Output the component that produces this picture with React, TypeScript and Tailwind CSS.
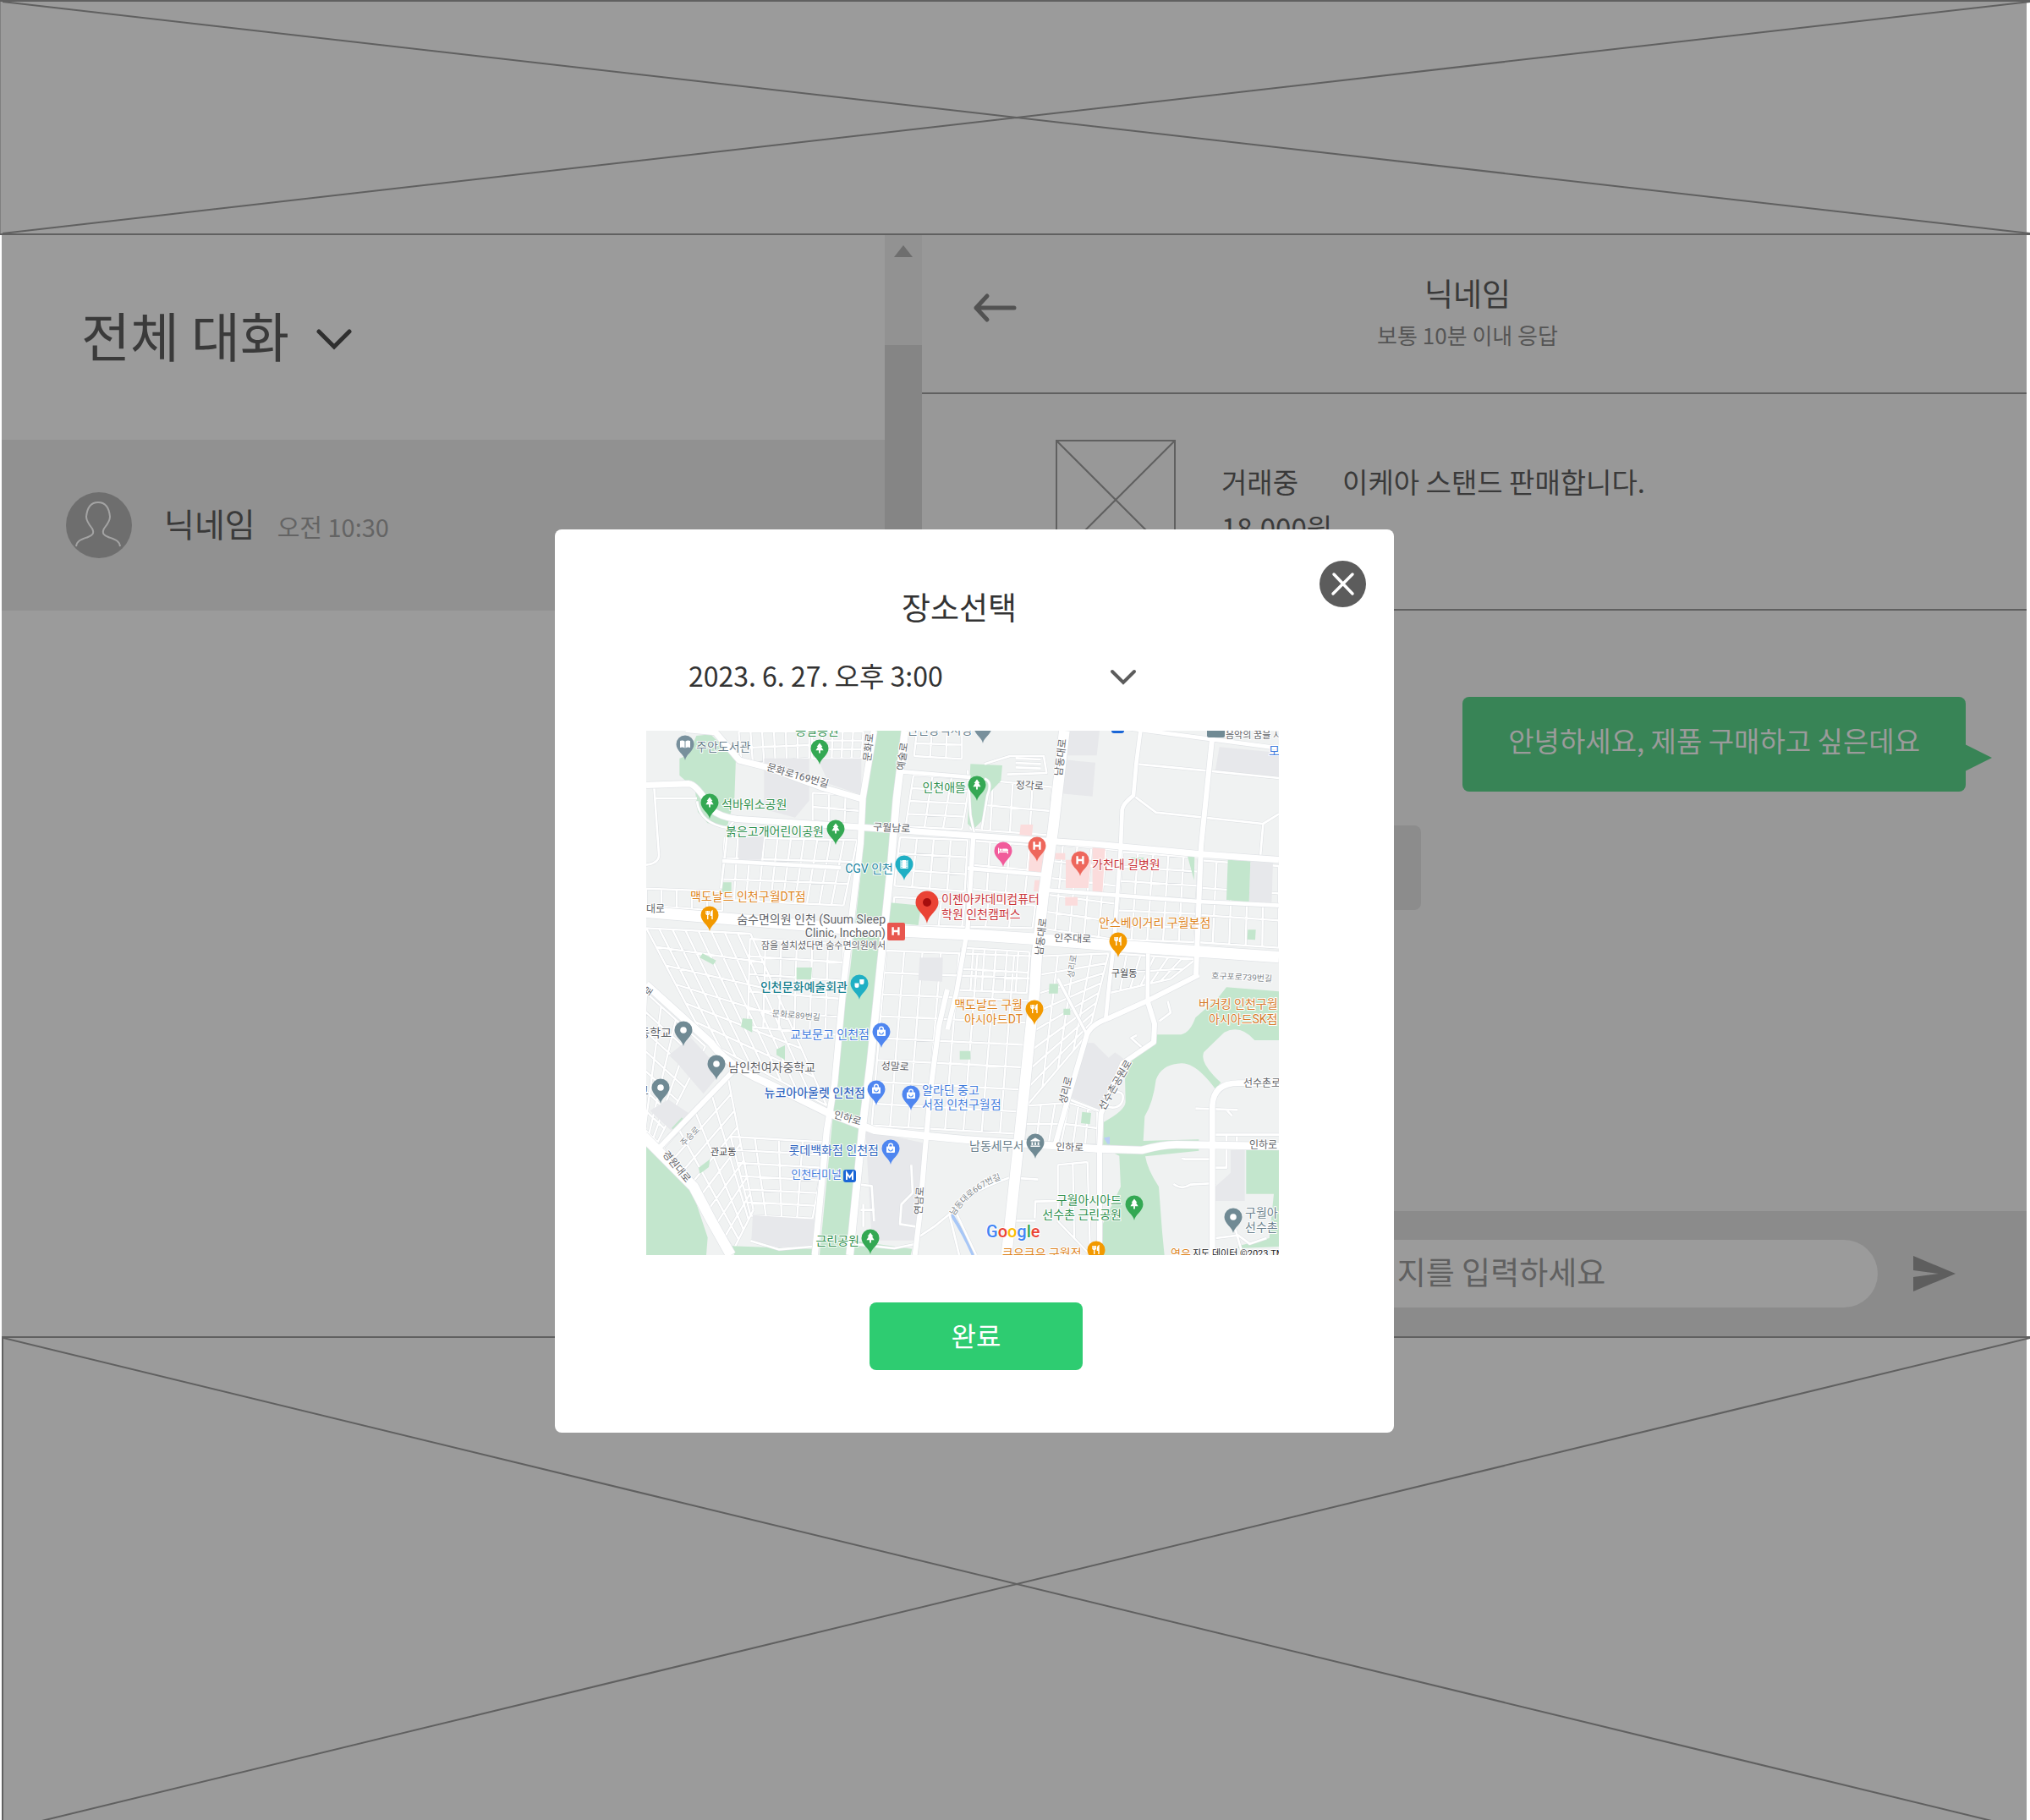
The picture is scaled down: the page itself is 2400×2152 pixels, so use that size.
import React from "react";

type Pt = [number, number];

/* ---------- Map geometry (drawn in a 2244 x 1860 space) ---------- */

function grid(a: Pt, b: Pt, c: Pt, d: Pt, nx: number, ny: number): string {
  const mix = (p: Pt, q: Pt, t: number): Pt => [p[0] + (q[0] - p[0]) * t, p[1] + (q[1] - p[1]) * t];
  const seg = (p: Pt, q: Pt) => `M${p[0].toFixed(0)},${p[1].toFixed(0)}L${q[0].toFixed(0)},${q[1].toFixed(0)}`;
  let out = "";
  for (let i = 0; i <= nx; i++) out += seg(mix(a, b, i / nx), mix(d, c, i / nx));
  for (let j = 0; j <= ny; j++) out += seg(mix(a, d, j / ny), mix(b, c, j / ny));
  return out;
}

const streets = [
  grid([328, 3], [578, 3], [578, 98], [338, 118], 6, 2),
  grid([588, 3], [770, 3], [763, 98], [588, 98], 5, 3),
  grid([590, 220], [765, 230], [760, 340], [590, 320], 3, 2),
  grid([278, 378], [748, 388], [700, 620], [268, 600], 10, 3),
  grid([960, 0], [1120, 0], [1120, 100], [950, 90], 3, 2),
  grid([948, 158], [1150, 168], [1120, 350], [920, 340], 3, 4),
  grid([900, 378], [1140, 388], [1130, 570], [880, 550], 4, 3),
  grid([880, 590], [1380, 620], [1370, 700], [870, 690], 6, 1),
  grid([1160, 170], [1440, 200], [1430, 370], [1150, 350], 4, 2),
  grid([1150, 390], [1430, 410], [1410, 590], [1140, 560], 4, 2),
  grid([0, 560], [270, 570], [270, 640], [0, 620], 5, 1),
  grid([368, 738], [700, 758], [690, 1080], [360, 1050], 6, 5),
  grid([0, 700], [370, 720], [640, 1330], [210, 1100], 8, 6),
  grid([850, 780], [1370, 800], [1320, 1430], [800, 1400], 8, 8),
  grid([1120, 770], [1360, 785], [1350, 930], [1110, 920], 6, 2),
  grid([1428, 400], [1680, 425], [1655, 740], [1400, 700], 5, 5),
  grid([1690, 430], [1960, 450], [1945, 750], [1665, 740], 5, 6),
  grid([1968, 460], [2244, 480], [2244, 770], [1950, 750], 5, 3),
  grid([1400, 800], [1640, 790], [1570, 1070], [1350, 1330], 4, 8),
  grid([1655, 790], [1950, 810], [1860, 880], [1645, 930], 6, 2),
  grid([300, 1440], [640, 1460], [590, 1730], [370, 1720], 4, 6),
  grid([60, 1480], [290, 1230], [380, 1700], [310, 1840], 4, 8),
  grid([0, 930], [210, 1120], [40, 1460], [-20, 1400], 4, 7),
  grid([1350, 1330], [1500, 1320], [1470, 1470], [1340, 1460], 3, 2),
  grid([1500, 1320], [1600, 1350], [1600, 1470], [1470, 1470], 3, 2),
  grid([1460, 1540], [1565, 1530], [1575, 1860], [1460, 1740], 2, 1),
].join("");

const localRoads = [
  "M1738,118L1998,143L2244,168",
  "M1728,230L1808,290L2188,330L2244,295M2188,330L2178,450",
  "M28,200L45,440Q46,470 0,476M35,240L180,240",
  "M180,250Q190,330 290,345L320,310M290,345L265,560",
  "M1200,118L1290,90L1410,90L1420,150L1280,155M1310,98L1400,102M1310,114L1400,118M1310,130L1400,134",
  "M1200,170Q1230,180 1210,230L1190,350M1140,140L1150,300L1165,370",
  "M1380,1738L1290,1738M1378,1730L1380,1670L1600,1665",
  "M1898,1518L1908,1518L1908,1520L2008,1520M2013,1433L2244,1433M2058,1433L2058,1550L2015,1550M2095,1440L2095,1470",
  "M1948,1340L2098,1345M2058,1345L2078,1366",
  "M1870,1608Q1900,1630 1930,1610L2020,1605",
  "M960,1800L1020,1760L1075,1715Q1130,1640 1290,1585L1390,1592",
  "M1075,1715L1110,1860M1100,1712L1170,1860",
  "M1740,1080L1720,1090L1760,1125M1820,1030L1860,1000L1850,960",
  "M1480,1300L1610,1350M1620,1300Q1700,1260 1690,1310Q1680,1350 1620,1330",
  "M760,1610L800,1615L808,1740M760,1700L810,1700M770,1680L770,1760",
  "M940,1540L945,1640L905,1680L900,1750L960,1760",
  "M370,1810L470,1840L590,1830M730,1820L880,1836L960,1820",
  "M2020,1800L2100,1790L2140,1820L2200,1800M2090,1770L2110,1840",
];

const roads: { d: string; w: number }[] = [
  { d: "M140,-5L245,5L330,105L430,130L620,200L768,243", w: 22 },
  { d: "M808,0L768,240L760,400L700,900L668,1250L640,1420L598,1860", w: 22 },
  { d: "M918,0L888,240L866,500L820,940L795,1180L768,1400L722,1860", w: 26 },
  { d: "M905,145L1150,165", w: 14 },
  { d: "M0,193L150,188Q180,190 230,278Q260,305 320,313L768,343L1128,370L1308,383L1600,403L1968,438L2244,458", w: 22 },
  { d: "M270,462L690,486", w: 14 },
  { d: "M1140,488L1420,512M1428,566L1960,606L2244,620", w: 14 },
  { d: "M1160,380L1140,700L1100,930L1068,1060", w: 16 },
  { d: "M1068,918L1038,1048L1008,1278L990,1478L970,1720L953,1860", w: 18 },
  { d: "M0,643L688,700L1128,722L1368,738L1658,762L2244,803", w: 40 },
  { d: "M1483,0L1443,350L1408,590L1385,800L1378,918L1328,1400L1278,1860", w: 38 },
  { d: "M0,900L230,1108Q290,1190 430,1250L650,1358L810,1418L1000,1438L1128,1450L1598,1483L1758,1488Q1830,1468 1880,1468L2244,1474", w: 26 },
  { d: "M-10,1438L168,1618Q230,1740 300,1860", w: 36 },
  { d: "M48,1478L308,1208", w: 18 },
  { d: "M1448,1478L1498,1298L1563,1078Q1580,1040 1640,1020L1778,958L1960,866", w: 18 },
  { d: "M1608,1860L1608,1478L1613,1358L1690,1180L1800,1105L1803,1040L1778,958", w: 18 },
  { d: "M1700,-10L2244,62", w: 14 },
  { d: "M2008,20L1968,410L1950,866", w: 18 },
  { d: "M1753,0L1738,118L1728,230Q1690,260 1688,280L1683,410L1660,740L1638,940L1630,1020", w: 14 },
  { d: "M1780,790L1778,958", w: 14 },
  { d: "M1460,880L1563,1078", w: 10 },
  { d: "M2008,1860L2008,1330Q2012,1250 2100,1250L2244,1250", w: 20 },
];

const GREEN = "#c3e6cd";
const GRAY = "#e7e8eb";
const PINK = "#fbdcdc";

const blocks: { fill: string; d: string }[] = [
  { fill: GRAY, d: "M418,98L578,98L578,248L528,308L418,278ZM608,98L763,98L763,228L648,188ZM328,378L418,378L408,458L328,458ZM970,805L1052,805L1050,890L965,885Z" },
  { fill: GRAY, d: "M1498,0L1608,0L1598,88L1488,88ZM1483,103L1593,113L1583,233L1473,223ZM2033,58L2244,78L2244,168L2018,143ZM2143,463L2223,468L2218,616L2138,608Z" },
  { fill: GRAY, d: "M83,1148L158,1088L268,1208L203,1288ZM13,1348L78,1308L153,1358L88,1418ZM778,1418L988,1463L958,1808L800,1808ZM378,1718L598,1733L588,1828L468,1833L373,1808Z" },
  { fill: GRAY, d: "M1558,1108Q1618,1098 1698,1168L1618,1348L1498,1298ZM2073,1488L2123,1488L2123,1668L2018,1668L2018,1618L2073,1568Z" },
  { fill: "#f0f2f2", d: "M1300,1500L1450,1500L1440,1860L1270,1860ZM1000,1460L1310,1480L1270,1860L970,1860Z" },
  { fill: PINK, d: "M1328,333L1372,333L1368,373L1324,370ZM1363,388L1418,388L1413,503L1356,498ZM1488,458L1578,458L1568,558L1488,558ZM1583,413L1628,418L1618,578L1583,578ZM1378,530L1408,530L1403,570L1374,570ZM1450,434L1486,434L1486,458L1450,456ZM1486,590L1530,590L1530,620L1486,620Z" },
  { fill: GREEN, d: "M812,0L912,0L890,240L873,480L835,800L815,960L775,1370L712,1860L615,1860L660,1390L700,1000L722,860L765,470L775,240Z" },
  { fill: GREEN, d: "M148,88L178,18L228,13L318,98L313,238L288,338L218,328L183,288L173,208L118,158L118,98Z" },
  { fill: GREEN, d: "M268,538L302,538L302,572L268,572ZM200,790L248,815L238,830L190,805ZM533,840L588,840L585,882L533,882ZM865,610L975,620L965,690L860,680Z" },
  { fill: GREEN, d: "M1150,118L1263,123L1258,178L1210,228L1190,320L1160,350L1140,330Z" },
  { fill: GREEN, d: "M2063,458L2143,463L2138,608L2058,600ZM1920,445L1945,445L1943,530ZM2134,706L2162,706L2160,742L2132,740ZM1430,898L1462,898L1460,932L1428,932ZM1480,986L1504,986L1504,1008L1480,1008Z" },
  { fill: GREEN, d: "M1720,450L1766,450L1766,462L1720,462ZM1112,1136L1150,1136L1150,1166L1112,1166ZM1546,1352L1578,1356L1574,1396L1542,1392Z" },
  { fill: GREEN, d: "M342,1020L376,1024L376,1070L336,1050ZM462,1130L492,1116L492,1168L462,1150ZM90,1410L126,1372L134,1380L100,1420ZM186,1550L226,1520L222,1548L190,1572Z" },
  { fill: GREEN, d: "M0,1455L78,1518L168,1648L218,1798L213,1860L0,1860ZM298,1828L588,1838L588,1860L313,1860ZM728,1808L943,1838L938,1860L723,1860Z" },
  {
    fill: GREEN,
    d: "M1803,1078L1898,1078Q1930,1070 1948,1018L2028,948L2058,910L2244,925L2244,1098L2158,1098Q2108,1040 2050,1070L1978,1140Q1960,1178 2038,1248L2018,1270Q1950,1178 1898,1180Q1828,1183 1808,1238Q1798,1318 1768,1368L1763,1455L1960,1450L1960,1490L1770,1510Q1778,1558 1818,1618L1830,1778L1838,1860L1618,1860L1620,1748L1683,1618L1678,1508L1620,1478L1623,1388Q1698,1348 1700,1318L1698,1218Q1718,1148 1798,1108Z",
  },
  { fill: GREEN, d: "M2128,1488L2244,1488L2244,1643L2128,1643ZM2226,1643L2244,1643L2244,1830L2100,1836L2100,1828L2210,1800Z" },
  { fill: "#f0f2f2", d: "M1770,960L1790,1040L1700,1110L1640,1160L1580,1100L1590,1060Z" },
  { fill: "#b9cef5", d: "M1623,1444L1644,1440L1644,1466L1636,1466Z" },
];

/* ---------- Map pins ---------- */

type Glyph = "tree" | "fork" | "bag" | "dot" | "book" | "film" | "mask" | "bank" | "bed" | "H";

function GlyphShape({ kind }: { kind: Glyph }) {
  switch (kind) {
    case "tree":
      return <path fill="#fff" d="M0-6.5L3.4-2H2L4.6 2.2H.9V5.5H-.9V2.2H-4.6L-2-2H-3.4Z" />;
    case "fork":
      return (
        <g fill="none" stroke="#fff" strokeWidth="1.4">
          <path d="M-4-5V-1.5Q-2.3.5-.6-1.5V-5M-2.3-5V5" />
          <path d="M3 5V-5Q1.2-4 1.4.4H3" fill="#fff" />
        </g>
      );
    case "bag":
      return (
        <g>
          <rect x="-5" y="-2.6" width="10" height="7.6" rx="1" fill="#fff" />
          <path d="M-2.3-2V-3.4a2.3 2.3 0 0 1 4.6 0V-2" fill="none" stroke="#fff" strokeWidth="1.4" />
          <path d="M-2.4.6a2.4 2.4 0 0 0 4.8 0" fill="none" stroke="#4285f4" strokeWidth="1.1" />
        </g>
      );
    case "dot":
      return <circle r="3.8" fill="#fff" />;
    case "book":
      return <path fill="#fff" d="M-6-4Q-3-5-.5-3.6V4.4Q-3 3-6 4ZM6-4Q3-5 .5-3.6V4.4Q3 3 6 4Z" />;
    case "film":
      return (
        <g>
          <rect x="-4.5" y="-5" width="9" height="10" fill="#fff" />
          <path d="M-3-5V5M3-5V5" stroke="#12b5cb" strokeWidth="1.1" strokeDasharray="1.4 1.2" />
        </g>
      );
    case "mask":
      return (
        <g fill="#fff">
          <path d="M-5.5-.5H-.5V2.5a2.5 2.5 0 0 1-5 0Z" />
          <path d="M.3-5H5.5V-1.5a2.6 2.6 0 0 1-5.2 0Z" />
        </g>
      );
    case "bank":
      return <path fill="#fff" d="M-5.5-2.5L0-5.8L5.5-2.5V-1.4H-5.5ZM-4.5-.6H-2.7V3H-4.5ZM-.9-.6H.9V3H-.9ZM2.7-.6H4.5V3H2.7ZM-5.5 3.6H5.5V5H-5.5Z" />;
    case "bed":
      return (
        <g fill="#fff">
          <path d="M-6-3.5H-4.8V.6H6V3.5H4.8V2H-4.8V3.5H-6Z" />
          <circle cx="-2.8" cy="-1.2" r="1.4" />
          <path d="M-.8-2.6H4Q6-2.6 6-.4V0H-.8Z" />
        </g>
      );
    case "H":
      return <path d="M-3.4-4.8V4.8M3.4-4.8V4.8M-3.4 0H3.4" stroke="#fff" strokeWidth="2.4" fill="none" />;
  }
}

const pins: { x: number; y: number; c: string; k: Glyph }[] = [
  { x: 46, y: 16, c: "#78909c", k: "book" },
  { x: 205, y: 21, c: "#34a853", k: "tree" },
  { x: 75, y: 85, c: "#34a853", k: "tree" },
  { x: 224, y: 116, c: "#34a853", k: "tree" },
  { x: 305, y: 158, c: "#1fafc4", k: "film" },
  { x: 75, y: 218, c: "#f29900", k: "fork" },
  { x: 252, y: 299, c: "#1fafc4", k: "mask" },
  { x: 398, y: -4, c: "#78909c", k: "dot" },
  { x: 391, y: 64, c: "#34a853", k: "tree" },
  { x: 422, y: 142, c: "#f15b9b", k: "bed" },
  { x: 462, y: 136, c: "#ee675c", k: "H" },
  { x: 513, y: 153, c: "#ee675c", k: "H" },
  { x: 558, y: 249, c: "#f29900", k: "fork" },
  { x: 44, y: 354, c: "#708a94", k: "dot" },
  { x: 83, y: 394, c: "#708a94", k: "dot" },
  { x: 17, y: 422, c: "#708a94", k: "dot" },
  { x: 278, y: 356, c: "#4f86f0", k: "bag" },
  { x: 272, y: 424, c: "#4f86f0", k: "bag" },
  { x: 313, y: 430, c: "#4f86f0", k: "bag" },
  { x: 289, y: 494, c: "#4f86f0", k: "bag" },
  { x: 265, y: 600, c: "#34a853", k: "tree" },
  { x: 459, y: 329, c: "#f29900", k: "fork" },
  { x: 460, y: 487, c: "#708a94", k: "bank" },
  { x: 577, y: 560, c: "#34a853", k: "tree" },
  { x: 694, y: 575, c: "#708a94", k: "dot" },
  { x: 532, y: 614, c: "#f29900", k: "fork" },
];

/* ---------- Map labels ---------- */

type Label = { t: string; x: number; y: number; c: string; s?: number; a?: "start" | "middle" | "end"; r?: number; w?: number };

const PARK = "#2f8f4e";
const SLATE = "#6a7f8c";
const ROAD = "#5f6368";
const FOOD = "#dd8421";
const SHOP = "#3f7bdc";
const HEALTH = "#c9353b";

const labels: Label[] = [
  { t: "주안도서관", x: 59, y: 24, c: SLATE },
  { t: "통일공원", x: 202, y: 5, c: PARK, a: "middle" },
  { t: "문화로169번길", x: 178, y: 57, c: ROAD, s: 12, a: "middle", r: 16 },
  { t: "석바위소공원", x: 89, y: 92, c: PARK },
  { t: "붉은고개어린이공원", x: 210, y: 124, c: PARK, a: "end" },
  { t: "문화로", x: 267, y: 20, c: ROAD, s: 12, a: "middle", r: -84 },
  { t: "예술로", x: 307, y: 31, c: ROAD, s: 12, a: "middle", r: -82 },
  { t: "인천애뜰", x: 378, y: 72, c: PARK, a: "end" },
  { t: "구월남로", x: 290, y: 119, c: ROAD, s: 12, a: "middle", r: 3 },
  { t: "CGV 인천", x: 292, y: 168, c: "#1c86a2", a: "end" },
  { t: "맥도날드 인천구월DT점", x: 52, y: 201, c: FOOD },
  { t: "대로", x: 0, y: 215, c: ROAD, s: 12 },
  { t: "숨수면의원 인천 (Suum Sleep", x: 283, y: 228, c: ROAD, a: "end" },
  { t: "Clinic, Incheon)", x: 283, y: 244, c: ROAD, a: "end" },
  { t: "잠을 설치셨다면 숨수면의원에서", x: 283, y: 258, c: ROAD, s: 11, a: "end" },
  { t: "이젠아카데미컴퓨터", x: 349, y: 204, c: HEALTH },
  { t: "학원 인천캠퍼스", x: 349, y: 222, c: HEALTH },
  { t: "인천문화예술회관", x: 238, y: 308, c: "#17808f", a: "end", w: 500 },
  { t: "인천광역시청", x: 308, y: 4, c: SLATE },
  { t: "남동대로", x: 494, y: 32, c: ROAD, s: 12, a: "middle", r: -83 },
  { t: "정각로", x: 453, y: 69, c: ROAD, s: 12, a: "middle", r: 3 },
  { t: "음악의 꿈을 시", x: 685, y: 9, c: ROAD, s: 11 },
  { t: "모", x: 736, y: 29, c: SHOP },
  { t: "가천대 길병원", x: 527, y: 163, c: HEALTH },
  { t: "안스베이거리 구월본점", x: 535, y: 232, c: FOOD },
  { t: "인주대로", x: 482, y: 249, c: ROAD, s: 12, r: 2 },
  { t: "남동대로", x: 471, y: 244, c: ROAD, s: 12, a: "middle", r: -83 },
  { t: "성리로", x: 507, y: 279, c: "#80868b", s: 10, a: "middle", r: -82 },
  { t: "구월동", x: 550, y: 291, c: "#3c4043", s: 11 },
  { t: "호구포로739번길", x: 668, y: 293, c: "#80868b", s: 10, r: 3 },
  { t: "문화로89번길", x: 177, y: 340, c: "#80868b", s: 10, a: "middle", r: 5 },
  { t: "교보문고 인천점", x: 264, y: 364, c: SHOP, a: "end" },
  { t: "등학교", x: 30, y: 362, c: ROAD, a: "end" },
  { t: "남인천여자중학교", x: 97, y: 403, c: ROAD },
  { t: "교", x: 3, y: 430, c: ROAD, a: "end" },
  { t: "로", x: 6, y: 310, c: ROAD, s: 11, a: "middle", r: -55 },
  { t: "성말로", x: 294, y: 401, c: ROAD, s: 12, a: "middle", r: 3 },
  { t: "뉴코아아울렛 인천점", x: 259, y: 433, c: "#3468c0", a: "end", w: 500 },
  { t: "알라딘 중고", x: 326, y: 430, c: SHOP },
  { t: "서점 인천구월점", x: 326, y: 447, c: SHOP },
  { t: "인하로", x: 237, y: 462, c: ROAD, s: 12, a: "middle", r: 16 },
  { t: "주승로", x: 54, y: 482, c: "#80868b", s: 10, a: "middle", r: -46 },
  { t: "관교동", x: 76, y: 502, c: "#3c4043", s: 11 },
  { t: "롯데백화점 인천점", x: 275, y: 501, c: "#3468c0", a: "end" },
  { t: "인천터미널", x: 231, y: 529, c: SHOP, s: 13, a: "end" },
  { t: "경원대로", x: 33, y: 518, c: ROAD, s: 12, a: "middle", r: 50 },
  { t: "연남로", x: 327, y: 556, c: ROAD, s: 12, a: "middle", r: -86 },
  { t: "근린공원", x: 252, y: 608, c: PARK, a: "end" },
  { t: "맥도날드 구월", x: 445, y: 329, c: FOOD, a: "end" },
  { t: "아시아드DT", x: 445, y: 346, c: FOOD, a: "end" },
  { t: "버거킹 인천구월", x: 653, y: 328, c: "#d57a2a" },
  { t: "아시아드SK점", x: 665, y: 346, c: "#d57a2a" },
  { t: "성리로", x: 500, y: 426, c: ROAD, s: 12, a: "middle", r: -76 },
  { t: "선수촌공원로", x: 558, y: 421, c: ROAD, s: 12, a: "middle", r: -60 },
  { t: "선수촌로", x: 706, y: 421, c: ROAD, s: 12 },
  { t: "남동세무서", x: 382, y: 496, c: SLATE },
  { t: "인하로", x: 484, y: 496, c: ROAD, s: 12, r: 2 },
  { t: "인하로", x: 713, y: 494, c: ROAD, s: 12 },
  { t: "구월아시아드", x: 562, y: 560, c: PARK, a: "end" },
  { t: "선수촌 근린공원", x: 562, y: 577, c: PARK, a: "end" },
  { t: "쿠우쿠우 구월점", x: 421, y: 623, c: FOOD },
  { t: "구월아", x: 708, y: 575, c: SLATE },
  { t: "선수촌", x: 708, y: 592, c: SLATE },
  { t: "역우", x: 620, y: 623, c: FOOD, s: 13 },
  { t: "지도 데이터 ©2023 TMap", x: 646, y: 622, c: "#202124", s: 11 },
];

function MapView() {
  return (
    <svg
      role="img"
      aria-label="인천 구월동 지도"
      viewBox="0 0 748 620"
      className="block w-full overflow-hidden bg-[#f0f2f2] font-['Roboto','Noto_Sans_CJK_KR',sans-serif]"
    >
      <g transform="scale(0.33333)" fill="none" strokeLinejoin="round">
        <path d={streets} stroke="#dcdfe2" strokeWidth="10" />
        <path d={streets} stroke="#ffffff" strokeWidth="7" />
        {blocks.map((b, i) => (
          <path key={i} d={b.d} fill={b.fill} />
        ))}
        <path d="M1083,1716Q1130,1790 1160,1860" stroke="#a8c7f7" strokeWidth="12" />
        {localRoads.map((d, i) => (
          <path key={i} d={d} stroke="#dcdfe2" strokeWidth="11" />
        ))}
        {localRoads.map((d, i) => (
          <path key={i} d={d} stroke="#ffffff" strokeWidth="8" />
        ))}
        {roads.map((r, i) => (
          <path key={i} d={r.d} stroke="#e0e3e6" strokeWidth={r.w + 4} />
        ))}
        {roads.map((r, i) => (
          <path key={i} d={r.d} stroke="#ffffff" strokeWidth={r.w} />
        ))}
      </g>

      <rect x="550" y="-10" width="15" height="13" rx="3" fill="#1a66d6" />
      <rect x="663" y="-10" width="21" height="18" rx="2" fill="#708a94" />
      <g transform="translate(295 237)">
        <rect x="-10" y="-10" width="21" height="21" rx="2" fill="#e8574f" />
        <GlyphShape kind="H" />
      </g>
      <rect x="233" y="519" width="15" height="15" rx="3" fill="#1a66d6" />
      <path d="M237 531V523L240.500 528L244 523V531" fill="none" stroke="#fff" strokeWidth="2" />

      {pins.map((p, i) => (
        <g key={i} transform={`translate(${p.x} ${p.y})`}>
          <path d="M0 19C-1 12-10.500 8-10.500 0A10.500 10.500 0 0 1 10.500 0C10.500 8 1 12 0 19Z" fill={p.c} />
          <GlyphShape kind={p.k} />
        </g>
      ))}
      <g transform="translate(332 203)">
        <path d="M0 25C-2 14-13.500 10-13.500 0A13.500 13.500 0 0 1 13.500 0C13.500 10 2 14 0 25Z" fill="#ea4335" />
        <circle r="5" fill="#a50e0e" />
      </g>

      <g stroke="#ffffff" strokeWidth="2" strokeLinejoin="round" style={{ paintOrder: "stroke" }}>
        {labels.map((l, i) => (
          <text
            key={i}
            x={l.x}
            y={l.y}
            fill={l.c}
            fontSize={l.s ?? 14}
            fontWeight={l.w ?? 400}
            textAnchor={l.a ?? "start"}
            transform={l.r ? `rotate(${l.r} ${l.x} ${l.y})` : undefined}
          >
            {l.t}
          </text>
        ))}
        <path id="curved-road" d="M364,574Q388,538 428,528" fill="none" stroke="none" />
        <text fontSize="10" fill="#80868b">
          <textPath href="#curved-road">남동대로667번길</textPath>
        </text>
        <text x="402" y="599" fontSize="20" fontWeight="500">
          <tspan fill="#4285f4">G</tspan>
          <tspan fill="#ea4335">o</tspan>
          <tspan fill="#fbbc04">o</tspan>
          <tspan fill="#4285f4">g</tspan>
          <tspan fill="#34a853">l</tspan>
          <tspan fill="#ea4335">e</tspan>
        </text>
      </g>
    </svg>
  );
}

/* ---------- Page parts ---------- */

function CrossLines({ className }: { className: string }) {
  return (
    <svg aria-hidden="true" viewBox="0 0 100 100" preserveAspectRatio="none" className={className}>
      <path d="M0 0L100 100M100 0L0 100" stroke="#606060" strokeWidth="2" vectorEffect="non-scaling-stroke" />
    </svg>
  );
}

function ConversationList() {
  return (
    <aside className="flex w-[1044px] shrink-0 flex-col bg-[#9b9b9b]">
      <h1 className="flex h-[242px] items-center pb-2 pl-[94px]">
        <button type="button" className="flex items-center gap-8 text-[63px] leading-[80px] text-[#3a3a3a]">
          전체 대화
          <svg aria-hidden="true" width="42" height="26" viewBox="0 0 42 26" fill="none" className="mt-3">
            <path d="M3 4L21 22L39 4" stroke="#2f2f2f" strokeWidth="5" strokeLinecap="round" />
          </svg>
        </button>
      </h1>
      <ul>
        <li className="flex h-[202px] items-center gap-[38px] bg-[#919191] pl-[76px]">
          <svg role="img" aria-label="프로필" width="78" height="78" viewBox="0 0 78 78" fill="none">
            <circle cx="39" cy="39" r="39" fill="#6e6e6e" />
            <path
              d="M12 64C13 57 18 56 26 53C31 51 34 49 31 43C27 38 24 34 24 29C25 18 30 12 38 12C46 12 51 18 52 29C52 34 49 38 45 43C42 49 45 51 50 53C58 56 63 57 64 64"
              stroke="#a4a4a4"
              strokeWidth="2"
            />
          </svg>
          <div className="flex items-baseline gap-[26px] pb-1.5">
            <span className="text-[39px] leading-[56px] text-[#3a3a3a]">닉네임</span>
            <time className="text-[29px] leading-[44px] text-[#646464]">오전 10:30</time>
          </div>
        </li>
      </ul>
    </aside>
  );
}

function Scrollbar() {
  return (
    <div className="flex w-11 shrink-0 flex-col bg-[#929292]">
      <svg aria-hidden="true" width="22" height="14" viewBox="0 0 22 14" className="mx-auto mt-3 mb-[104px]">
        <path d="M11 0L22 14H0Z" fill="#6e6e6e" />
      </svg>
      <div className="h-[640px] bg-[#858585]" />
    </div>
  );
}

function ChatPane() {
  return (
    <section className="flex min-w-0 flex-1 flex-col bg-[#989898]">
      <header className="grid h-[188px] grid-cols-[120px_1fr_136px] items-start border-b-2 border-[#606060] pt-[42px]">
        <button type="button" aria-label="뒤로" className="mt-[26px] ml-[60px]">
          <svg width="52" height="36" viewBox="0 0 52 36" fill="none">
            <path d="M17 4L4 18L17 32M4 18H49" stroke="#525252" strokeWidth="5" strokeLinecap="round" strokeLinejoin="round" />
          </svg>
        </button>
        <div className="text-center">
          <h2 className="text-[37px] leading-[52px] text-[#3a3a3a]">닉네임</h2>
          <p className="mt-1 text-[26px] leading-[40px] text-[#555555]">보통 10분 이내 응답</p>
        </div>
      </header>

      <div className="flex h-64 items-start gap-[54px] border-b-2 border-[#606060] pt-[54px] pl-[158px]">
        <div className="h-[142px] w-[142px] border-2 border-[#606060]">
          <CrossLines className="h-full w-full" />
        </div>
        <div className="pt-[22px] text-[33px] leading-[54px] text-[#3a3a3a]">
          <p className="flex gap-[52px]">
            <span>거래중</span>
            <span>이케아 스탠드 판매합니다.</span>
          </p>
          <p>18,000원</p>
        </div>
      </div>

      <div className="flex h-[710px] flex-col gap-10 pt-[102px]">
        <div className="relative mr-[72px] flex h-28 items-center self-end rounded-lg bg-[#388456] px-[54px] pb-2.5">
          <p className="text-[33px] leading-[48px] text-[#9b9b9b]">안녕하세요, 제품 구매하고 싶은데요</p>
          <svg aria-hidden="true" width="32" height="32" viewBox="0 0 32 32" className="absolute top-14 left-full -ml-px">
            <path d="M0 0L32 16L0 32Z" fill="#388456" />
          </svg>
        </div>
        <div className="ml-[60px] h-[100px] w-[530px] rounded-lg bg-[#8c8c8c]" />
      </div>

      <form className="flex h-[148px] items-center bg-[#8b8b8b] pl-[172px]">
        <input
          type="text"
          aria-label="메시지"
          placeholder="메시지를 입력하세요"
          className="h-20 min-w-0 flex-1 rounded-full bg-[#9b9b9b] pb-1.5 text-center text-[37px] placeholder:text-[#606060] placeholder:opacity-100"
        />
        <button type="button" aria-label="보내기" className="mr-[84px] ml-[42px]">
          <svg width="50" height="42" viewBox="0 0 50 42">
            <path d="M0 0L50 21L0 42V25L30 21L0 17Z" fill="#5e5e5e" />
          </svg>
        </button>
      </form>
    </section>
  );
}

function PlaceDialog() {
  return (
    <div role="dialog" aria-modal="true" aria-labelledby="place-title" className="relative w-[992px] max-w-full rounded-lg bg-white pt-[65px] pb-[74px]">
      <h2 id="place-title" className="pr-9 text-center text-[37px] leading-[52px] text-[#333333]">
        장소선택
      </h2>
      <button type="button" aria-label="닫기" className="absolute top-[37px] right-[33px]">
        <svg width="55" height="55" viewBox="0 0 55 55" fill="none">
          <circle cx="27.500" cy="27.500" r="27.500" fill="#5c5c5c" />
          <path d="M17 16L39 39M39 16L16 39" stroke="#ffffff" strokeWidth="3.500" strokeLinecap="round" />
        </svg>
      </button>

      <div className="relative mt-[31px] ml-[156px] w-[532px]">
        <select aria-label="거래 일시" className="block h-12 w-full appearance-none bg-transparent pl-0.5 text-[32px] leading-[48px] text-[#333333]">
          <option>2023. 6. 27. 오후 3:00</option>
        </select>
        <svg aria-hidden="true" width="32" height="20" viewBox="0 0 32 20" fill="none" className="pointer-events-none absolute top-[17px] right-0">
          <path d="M3 3L16 16L29 3" stroke="#5c5c5c" strokeWidth="4" strokeLinecap="round" />
        </svg>
      </div>

      <div className="mt-[42px] ml-[108px] w-[748px]">
        <MapView />
      </div>

      <div className="mt-14 flex justify-center pl-1">
        <button type="button" className="h-20 w-[252px] rounded-lg bg-[#2ecc71] pb-1 text-[32px] leading-[48px] text-white">
          완료
        </button>
      </div>
    </div>
  );
}

export default function App() {
  return (
    <div className="relative flex min-h-screen flex-col overflow-hidden bg-white font-['Noto_Sans_CJK_KR','Noto_Sans',sans-serif]">
      <header className="h-[278px] border-y-2 border-[#606060]">
        <div className="mr-1 h-full border-l border-[#808080] bg-[#9b9b9b]">
          <CrossLines className="ml-0.5 h-full w-[calc(100%+2px)]" />
        </div>
      </header>

      <main className="mr-1 ml-0.5 flex">
        <ConversationList />
        <Scrollbar />
        <ChatPane />
      </main>

      <footer className="relative ml-0.5 min-h-[400px] flex-1 overflow-hidden border-t-2 border-l-2 border-[#606060]">
        <div className="absolute inset-0 mr-1 bg-[#9b9b9b]">
          <CrossLines className="h-[582px] w-[calc(100%+4px)]" />
        </div>
      </footer>

      <div className="absolute inset-0 flex items-start justify-center pt-[626px] pr-24">
        <PlaceDialog />
      </div>
    </div>
  );
}
